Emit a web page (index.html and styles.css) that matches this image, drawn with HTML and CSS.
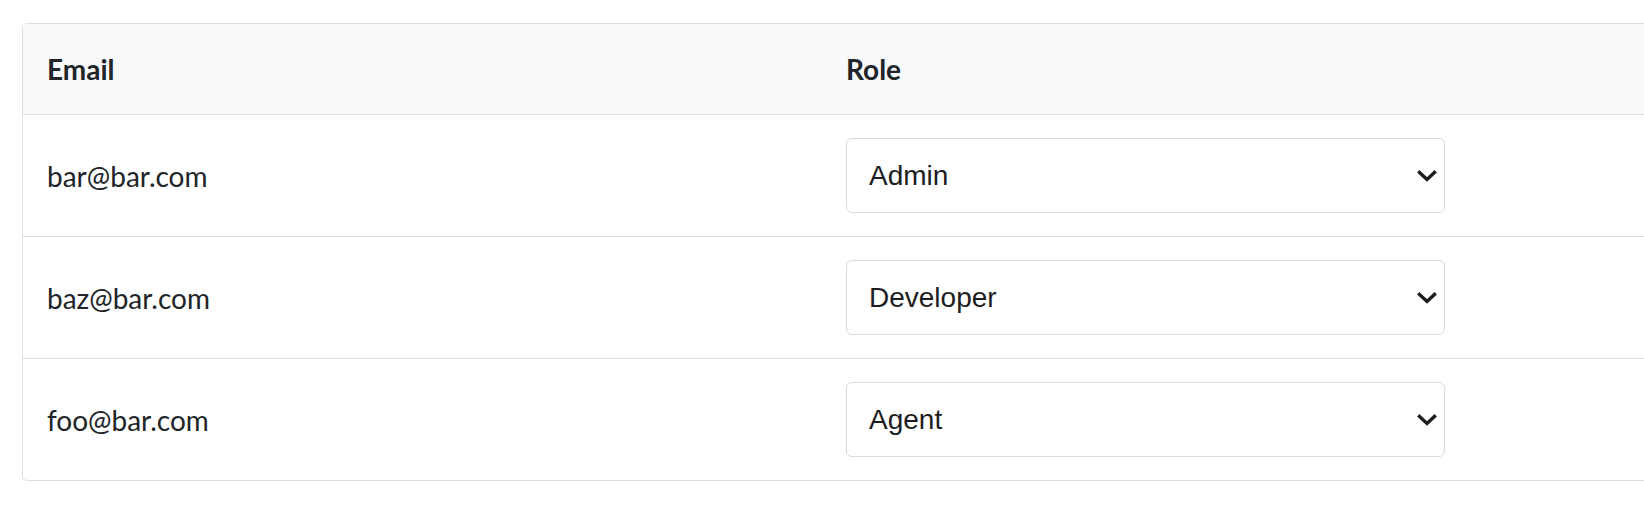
FILE: index.html
```html
<!DOCTYPE html>
<html>
<head>
<meta charset="utf-8">
<link rel="stylesheet" href="styles.css">
</head>
<body>
<div class="page">
  <div class="card">
    <table class="users">
      <colgroup>
        <col class="col-email">
        <col class="col-role">
      </colgroup>
      <thead>
        <tr><th>Email</th><th>Role</th></tr>
      </thead>
      <tbody>
        <tr>
          <td>bar@bar.com</td>
          <td>
            <div class="select-wrap">
              <select class="role-select"><option>Admin</option><option>Developer</option><option>Agent</option></select>
              <svg class="chev" viewBox="0 0 20 12" width="20" height="12"><polyline points="2.5,2.5 10,9.5 17.5,2.5" fill="none" stroke="#1d1d1f" stroke-width="3.4" stroke-linecap="square" stroke-linejoin="miter"/></svg>
            </div>
          </td>
        </tr>
        <tr>
          <td>baz@bar.com</td>
          <td>
            <div class="select-wrap">
              <select class="role-select"><option>Admin</option><option selected>Developer</option><option>Agent</option></select>
              <svg class="chev" viewBox="0 0 20 12" width="20" height="12"><polyline points="2.5,2.5 10,9.5 17.5,2.5" fill="none" stroke="#1d1d1f" stroke-width="3.4" stroke-linecap="square" stroke-linejoin="miter"/></svg>
            </div>
          </td>
        </tr>
        <tr>
          <td>foo@bar.com</td>
          <td>
            <div class="select-wrap">
              <select class="role-select"><option>Admin</option><option>Developer</option><option selected>Agent</option></select>
              <svg class="chev" viewBox="0 0 20 12" width="20" height="12"><polyline points="2.5,2.5 10,9.5 17.5,2.5" fill="none" stroke="#1d1d1f" stroke-width="3.4" stroke-linecap="square" stroke-linejoin="miter"/></svg>
            </div>
          </td>
        </tr>
      </tbody>
    </table>
  </div>
</div>
</body>
</html>
```
FILE: styles.css
```css
html, body {
  margin: 0;
  padding: 0;
  background: #ffffff;
  overflow: hidden;
}

body {
  font-family: Lato, "Noto Sans", sans-serif;
  color: #212529;
}

.page {
  padding: 23px 0 0 22px;
  width: 1700px;
}

.card {
  width: 1680px;
  border: 1px solid #dcdedf;
  border-radius: 5px;
  overflow: hidden;
}

.users {
  width: 100%;
  border-collapse: collapse;
  table-layout: fixed;
}

.col-email {
  width: 799px;
}

.users th {
  background: #f8f9fa;
  font-weight: 700;
  font-size: 28px;
  line-height: 42px;
  text-align: left;
  padding: 24px 24px;
  border-bottom: 1px solid #dcdedf;
  color: #212529;
}

.users td {
  font-size: 28px;
  padding: 23px 24px;
  vertical-align: middle;
  border-bottom: 1px solid #dcdedf;
}

.users tbody tr:last-child td {
  border-bottom: none;
}

.select-wrap {
  position: relative;
  width: 599px;
}

.role-select {
  -webkit-appearance: none;
  appearance: none;
  display: block;
  width: 599px;
  height: 75px;
  box-sizing: border-box;
  border: 1.5px solid #d8d9da;
  border-radius: 6px;
  background: #ffffff;
  padding: 0 50px 0 22px;
  font-family: "Liberation Sans", Arial, sans-serif;
  font-size: 28px;
  color: #1d1d1f;
}

.chev {
  position: absolute;
  right: 8px;
  top: 32px;
  pointer-events: none;
}
```
